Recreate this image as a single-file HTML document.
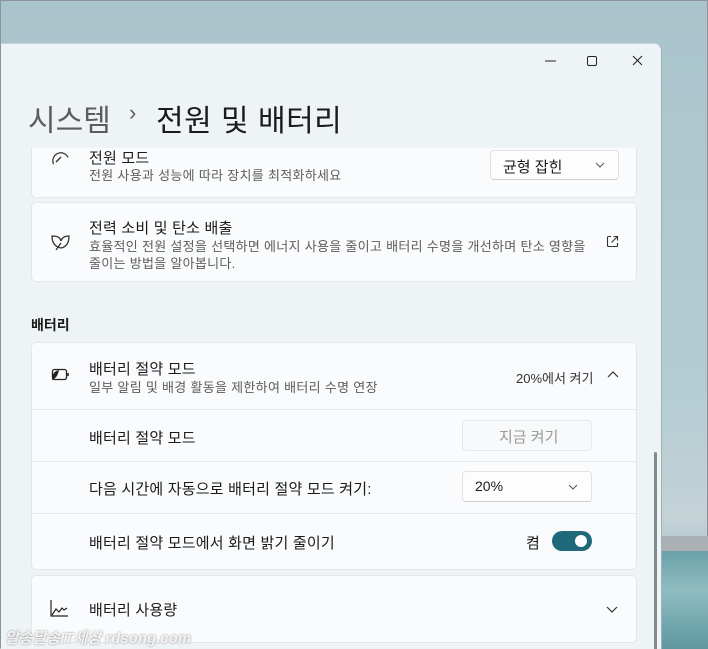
<!DOCTYPE html>
<html><head><meta charset="utf-8"><style>
*{margin:0;padding:0;box-sizing:border-box}
body{width:708px;height:648px;overflow:hidden;position:relative;font-family:"Liberation Sans","Noto Sans CJK KR",sans-serif;color:#1b1b1b;background:linear-gradient(180deg,#a9c4cc 0%,#b3cdd3 60%,#c4d2d6 80%,#7aa9b0 100%);border:1px solid #8a9499}
.win{position:absolute;left:0;top:42px;width:661px;height:606px;background:#eef3f6;border-top-right-radius:8px;border-right:1px solid #9fb0b6;border-top:1px solid #c5d3d8;overflow:hidden}
.t{position:absolute;white-space:nowrap}
.card{position:absolute;left:30px;width:606px;background:#f9fbfc;border:1px solid #e3e7ea;border-radius:5px}
.sub{font-size:13px;color:#5d5d5d;letter-spacing:0.3px}
.tt{font-size:15px;color:#1b1b1b;letter-spacing:0.2px}
.dd{position:absolute;background:#fdfdfd;border:1px solid #e2e2e2;border-bottom-color:#cfcfcf;border-radius:4px}
.line{position:absolute;left:0;right:0;height:1px;background:#e5e8ea}
</style></head><body>
<div style="position:absolute;left:661px;top:535px;width:47px;height:16px;background:#aab0b3"></div>
<div style="position:absolute;left:661px;top:550px;width:47px;height:98px;background:linear-gradient(180deg,#6aa0a8,#8fbdc2 40%,#5e979f)"></div>
<div class="win">
<div class="card" style="top:88px;height:66px;border-top:none;border-radius:0 0 5px 5px">
 <svg class="t" style="left:18px;top:17px" width="20" height="16"><path d="M2 12a8 8 0 0 1 16 0" fill="none" stroke="#333" stroke-width="1.2" transform="rotate(-25 10 10)"/><path d="M6 13l5-5" stroke="#333" stroke-width="1.4"/></svg>
 <div class="t tt" style="left:57px;top:15px">전원 모드</div>
 <div class="t sub" style="left:57px;top:33px">전원 사용과 성능에 따라 장치를 최적화하세요</div>
</div>
<div class="t" style="left:0;top:0;width:661px;height:104px;background:#eef3f6"></div>
<div class="dd" style="left:489px;top:106px;width:129px;height:30px"><div class="t" style="left:12px;top:5px;font-size:15px">균형 잡힌</div><svg class="t" style="left:104px;top:11px" width="10" height="7"><path d="M1 1l4 4 4-4" fill="none" stroke="#555"/></svg></div>
<svg class="t" style="left:538px;top:10px" width="110" height="14"><path d="M6 7h11" stroke="#222" stroke-width="1"/><rect x="48.5" y="2.5" width="9" height="9" rx="1.5" fill="none" stroke="#222"/><path d="M94 2l9 9M103 2l-9 9" stroke="#222"/></svg>
<div class="t" style="left:27px;top:52px;font-size:30px;color:#5c5c5c">시스템</div>
<div class="t" style="left:128px;top:56px;font-size:22px;color:#5c5c5c">›</div>
<div class="t" style="left:155px;top:52px;font-size:30px;color:#1b1b1b;letter-spacing:0.5px">전원 및 배터리</div>

<div class="card" style="top:158px;height:80px">
 <svg class="t" style="left:17px;top:30px" width="22" height="20"><path d="M3 3c5 0 8 1 9 5 1-4 4-5 8-5 0 7-3 11-8 12-5-1-9-4-9-12z" fill="none" stroke="#333" stroke-width="1.3"/><path d="M7 17l5-7" stroke="#333" stroke-width="1.3"/></svg>
 <div class="t tt" style="left:57px;top:14px">전력 소비 및 탄소 배출</div>
 <div class="t sub" style="left:57px;top:33px">효율적인 전원 설정을 선택하면 에너지 사용을 줄이고 배터리 수명을 개선하며 탄소 영향을</div>
 <div class="t sub" style="left:57px;top:50px">줄이는 방법을 알아봅니다.</div>
 <svg class="t" style="left:574px;top:32px" width="13" height="13"><path d="M5 1.5H2.5a1 1 0 0 0-1 1v8a1 1 0 0 0 1 1h8a1 1 0 0 0 1-1V8M7.5 1.5h4v4M11.5 1.5l-6 6" fill="none" stroke="#333" stroke-width="1.1"/></svg>
</div>

<div class="t" style="left:30px;top:271px;font-size:14px;font-weight:bold">배터리</div>

<div class="card" style="top:298px;height:228px">
 <svg class="t" style="left:17px;top:24px" width="24" height="16"><rect x="3.5" y="2.5" width="14" height="10" rx="2" fill="none" stroke="#222" stroke-width="1.3"/><path d="M19 6v3" stroke="#222" stroke-width="1.6"/><path d="M3 13c0-5 2-9 7-10-1 4-2 8-7 10z" fill="#222"/></svg>
 <div class="t tt" style="left:57px;top:15px">배터리 절약 모드</div>
 <div class="t sub" style="left:57px;top:34px">일부 알림 및 배경 활동을 제한하여 배터리 수명 연장</div>
 <div class="t" style="left:484px;top:25px;font-size:13px;color:#333">20%에서 켜기</div>
 <svg class="t" style="left:575px;top:28px" width="12" height="8"><path d="M1 6l5-5 5 5" fill="none" stroke="#333" stroke-width="1.2"/></svg>
 <div class="line" style="top:66px"></div>
 <div class="t tt" style="left:57px;top:84px">배터리 절약 모드</div>
 <div class="dd" style="left:430px;top:77px;width:130px;height:31px;background:#f7f9fa;border-color:#e6e8ea"><div class="t" style="left:36px;top:5px;font-size:15px;color:#9a9a9a">지금 켜기</div></div>
 <div class="line" style="top:118px"></div>
 <div class="t tt" style="left:57px;top:135px">다음 시간에 자동으로 배터리 절약 모드 켜기:</div>
 <div class="dd" style="left:430px;top:128px;width:130px;height:31px"><div class="t" style="left:12px;top:6px;font-size:14px">20%</div><svg class="t" style="left:105px;top:12px" width="10" height="7"><path d="M1 1l4 4 4-4" fill="none" stroke="#555"/></svg></div>
 <div class="line" style="top:170px"></div>
 <div class="t tt" style="left:57px;top:189px">배터리 절약 모드에서 화면 밝기 줄이기</div>
 <div class="t" style="left:494px;top:189px;font-size:15px">켬</div>
 <div class="t" style="left:520px;top:188px;width:40px;height:20px;border-radius:10px;background:#1f6a7a"><div class="t" style="left:23px;top:4px;width:12px;height:12px;border-radius:50%;background:#fff"></div></div>
</div>

<div class="card" style="top:531px;height:68px">
 <svg class="t" style="left:17px;top:23px" width="20" height="20"><path d="M2 1v16h17M3 16l4-6 3 3 3-4 2 2 3-2" fill="none" stroke="#222" stroke-width="1.2"/></svg>
 <div class="t tt" style="left:57px;top:23px">배터리 사용량</div>
 <svg class="t" style="left:574px;top:30px" width="12" height="8"><path d="M1 1l5 5 5-5" fill="none" stroke="#333" stroke-width="1.2"/></svg>
</div>
<div class="t" style="left:653px;top:408px;width:3px;height:198px;background:#838a8e;border-radius:2px"></div>
</div>
<div class="t" style="left:4px;top:626px;font-size:15px;font-style:italic;font-weight:bold;color:rgba(255,255,255,0.85);text-shadow:0 0 2px #888">알송달송IT세상 rdsong.com</div>
</body></html>
